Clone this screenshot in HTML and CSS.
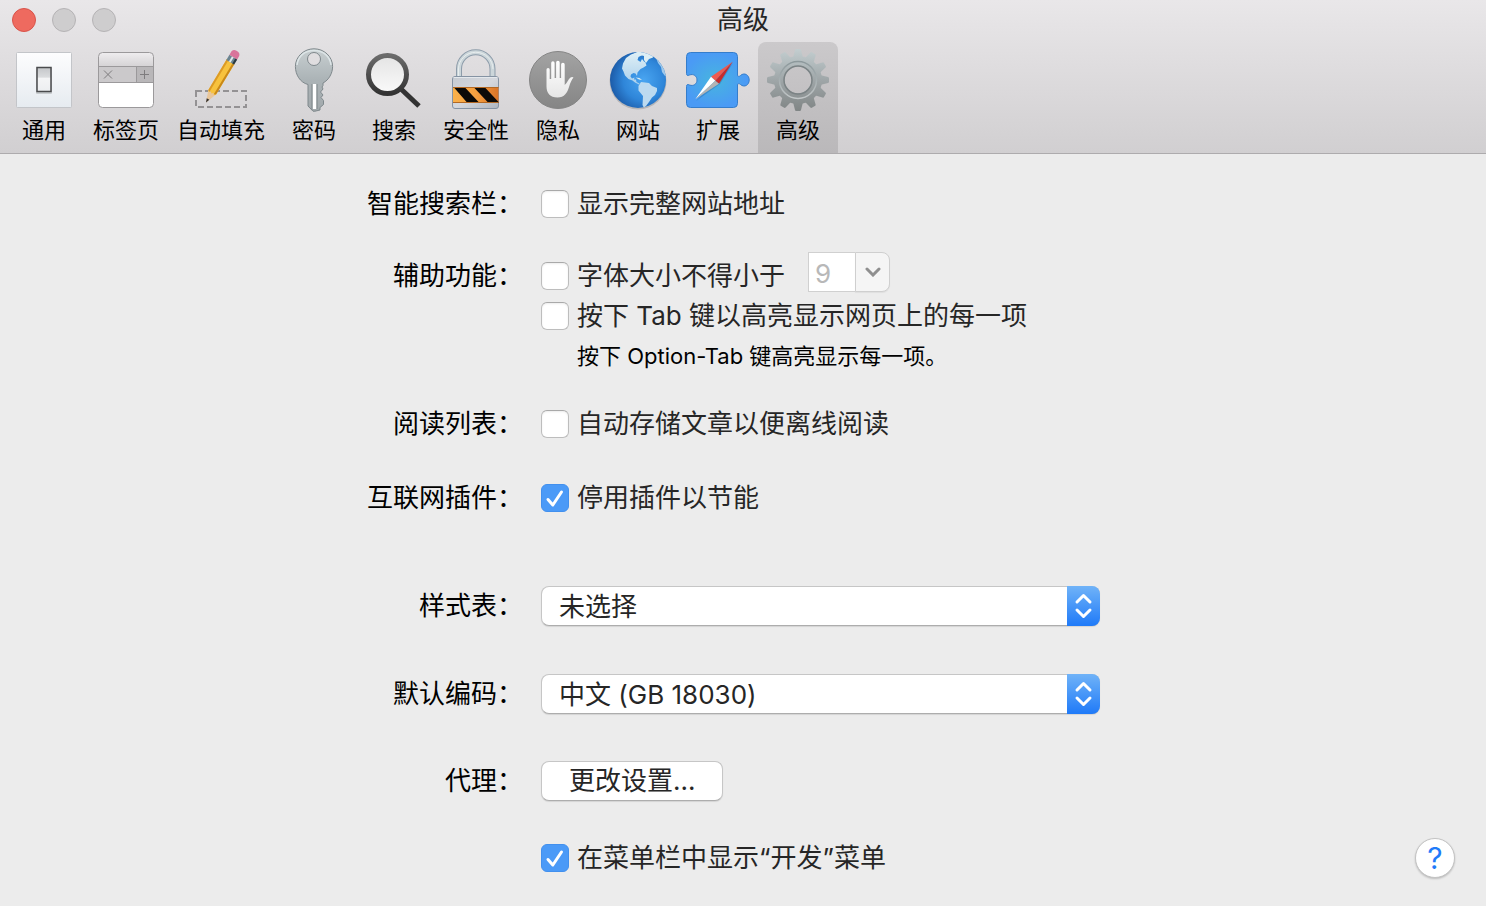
FILE: index.html
```html
<!DOCTYPE html>
<html lang="zh-CN">
<head>
    <meta charset="UTF-8">
    <meta name="viewport" content="width=device-width, initial-scale=1.0">
    <title>高级</title>
    <link rel="stylesheet" href="styles.css">
</head>
<body>
    <header class="window-header">
        <div class="titlebar">
            <div class="lights">
                <button class="light close" type="button" aria-label="关闭"></button>
                <button class="light" type="button" aria-label="最小化"></button>
                <button class="light" type="button" aria-label="缩放"></button>
            </div>
            <h1>高级</h1>
        </div>

        <nav class="toolbar">
            <button class="tool" type="button">
                <svg viewBox="0 0 64 64">
                    <defs>
                        <linearGradient id="plate" x1="0" y1="0" x2="0" y2="1"><stop offset="0" stop-color="#fdfdfe"/><stop offset="1" stop-color="#e6ebf0"/></linearGradient>
                        <linearGradient id="switch" x1="0" y1="0" x2="0" y2="1"><stop offset="0" stop-color="#c4c6c9"/><stop offset=".4" stop-color="#dadcde"/><stop offset=".45" stop-color="#f4f5f6"/><stop offset="1" stop-color="#eceef0"/></linearGradient>
                    </defs>
                    <rect x="4.5" y="4.5" width="55" height="55" rx="1" fill="url(#plate)" stroke="#c3c5c9"/>
                    <rect x="24" y="19" width="16" height="27" rx="1" fill="#000" opacity=".15"/>
                    <rect x="25" y="19.5" width="14" height="24" fill="url(#switch)" stroke="#4a4b4d" stroke-width="1.5"/>
                </svg>
                通用
            </button>
            <button class="tool" type="button">
                <svg viewBox="0 0 64 64">
                    <defs>
                        <linearGradient id="tabtop" x1="0" y1="0" x2="0" y2="1"><stop offset="0" stop-color="#efedef"/><stop offset="1" stop-color="#d5d3d5"/></linearGradient>
                    </defs>
                    <rect x="4.5" y="4.5" width="55" height="55" rx="4" fill="#fff"/>
                    <path d="M4.500 18.500V8.500a4 4 0 0 1 4-4h47a4 4 0 0 1 4 4v10z" fill="url(#tabtop)"/>
                    <path d="M4.500 18.500h38v16h-38z" fill="#cbc9cb"/>
                    <path d="M42.500 18.500h17v16h-17z" fill="#b9b7b9"/>
                    <path d="M4.500 18.500h55M4.500 34.500h55M42.500 18.500v16" stroke="#9b999b" fill="none"/>
                    <rect x="4.500" y="4.500" width="55" height="55" rx="4" fill="none" stroke="#9b999b"/>
                    <path d="M10 22.500l8 8M18 22.500l-8 8M50.500 22v9M46 26.500h9" stroke="#7e7c7e" fill="none"/>
                </svg>
                标签页
            </button>
            <button class="tool" type="button">
                <svg viewBox="0 0 64 64">
                    <rect x="7" y="43" width="50" height="16" fill="none" stroke="#949294" stroke-width="2" stroke-dasharray="6 3"/>
                    <g transform="translate(17 54.500) rotate(31)">
                        <path d="M0 0L-4.500-12h9z" fill="#e8c69b"/>
                        <path d="M0 0l-1.500-4h3z" fill="#33302e"/>
                        <path d="M-4.500-12V-48h9v36l-1.500 1.500L1.500-12 0-10.500-1.500-12-3-10.500z" fill="#f7c23e"/>
                        <path d="M-4.500-12V-48h2v37z" fill="#dc9a25"/>
                        <path d="M2.500-11V-48h2v36z" fill="#c98818"/>
                        <path d="M-4.500-47h9v-6h-9z" fill="#6b8490"/>
                        <path d="M-1.500-47h2v-6h-2z" fill="#dfe8eb"/>
                        <path d="M2.500-47h2v-6h-2z" fill="#293940"/>
                        <path d="M-4.500-53v-4a4 4 0 0 1 4-3h1a4 4 0 0 1 4 3v4z" fill="#d9749b"/>
                    </g>
                </svg>
                自动填充
            </button>
            <button class="tool" type="button">
                <svg viewBox="0 0 64 64">
                    <defs>
                        <linearGradient id="key" x1="0" y1="0" x2="0" y2="1"><stop offset="0" stop-color="#c8cfd1"/><stop offset=".5" stop-color="#abb3b6"/><stop offset="1" stop-color="#a2a9ac"/></linearGradient>
                    </defs>
                    <path fill-rule="evenodd" d="M32 .8C42 .8 50.600 8.500 50.600 18.500c0 6.500-3.600 13.500-9.600 16.500v2.500l-1 1.500 1 2-2.500 3 2.500 3-2 2.500 2.500 3v4l-3.500 3v2.500L33 63.200h-2L26 58V36.500C18 34.500 13.400 26.500 13.400 18.500 13.400 8.500 22 .8 32 .8zM32 4.500a6.500 6.500 0 1 0 0 13 6.500 6.500 0 0 0 0-13z" fill="url(#key)" stroke="#7f888c"/>
                    <path d="M15 17C16 8 23 2.500 32 2.500S48 8 49 17" fill="none" stroke="#dde5e7" stroke-width="1.500"/>
                    <path d="M30.500 36h4v25h-4z" fill="#fff"/>
                    <path d="M30 36v25.500M35 36v25" stroke="#7d8588" fill="none"/>
                </svg>
                密码
            </button>
            <button class="tool" type="button">
                <svg viewBox="0 0 64 64">
                    <defs>
                        <linearGradient id="lens" x1="0" y1="0" x2="0" y2="1"><stop offset="0" stop-color="#e4e4e4"/><stop offset="1" stop-color="#fafafa"/></linearGradient>
                        <linearGradient id="rim" x1="0" y1="0" x2="0" y2="1"><stop offset="0" stop-color="#6b6b6b"/><stop offset="1" stop-color="#333"/></linearGradient>
                    </defs>
                    <path d="M39 41L57 58" stroke="#333" stroke-width="5" fill="none"/>
                    <circle cx="25.500" cy="26.500" r="19" fill="url(#lens)" stroke="url(#rim)" stroke-width="5"/>
                </svg>
                搜索
            </button>
            <button class="tool" type="button">
                <svg viewBox="0 0 64 64">
                    <defs>
                        <linearGradient id="metal" x1="0" y1="0" x2="1" y2="1"><stop offset="0" stop-color="#c6cbd2"/><stop offset=".5" stop-color="#d5d8de"/><stop offset="1" stop-color="#aeb5bf"/></linearGradient>
                        <linearGradient id="warn" x1="0" y1="0" x2="1" y2="0"><stop offset="0" stop-color="#fab14a"/><stop offset=".5" stop-color="#f5a041"/><stop offset="1" stop-color="#da7427"/></linearGradient>
                    </defs>
                    <path d="M15 30V21a16.500 16.500 0 0 1 33.500 0V30" fill="none" stroke="#8d9caa" stroke-width="6"/>
                    <path d="M15 30V21a16.500 16.500 0 0 1 33.500 0V30" fill="none" stroke="#ccd6da" stroke-width="4"/>
                    <path d="M14.500 30V21a17 16.500 0 0 1 34.500 0" fill="none" stroke="#e8eeef" stroke-width="1"/>
                    <rect x="8.500" y="28.500" width="46" height="32" rx="2.500" fill="url(#metal)" stroke="#8593a3"/>
                    <path d="M9.500 29.500h44" stroke="#e4e8ec"/>
                    <path d="M9 39h45.500v16H9z" fill="url(#warn)"/>
                    <path d="M10 39.500h11l14 15H23zM30 39.500h11l14 15H44z" fill="#0b0a08"/>
                    <path d="M9 39.500h45.500M9 54.500h45.500" stroke="#b26925" fill="none"/>
                </svg>
                安全性
            </button>
            <button class="tool" type="button">
                <svg viewBox="0 0 64 64">
                    <defs>
                        <linearGradient id="disc" x1="0" y1="0" x2="0" y2="1"><stop offset="0" stop-color="#a3a3a3"/><stop offset="1" stop-color="#858585"/></linearGradient>
                        <linearGradient id="palm" x1="0" y1="0" x2="0" y2="1"><stop offset="0" stop-color="#fff"/><stop offset="1" stop-color="#e6e6e6"/></linearGradient>
                    </defs>
                    <circle cx="32" cy="32" r="28.500" fill="url(#disc)" stroke="#858585"/>
                    <path d="M20.500 21.500a1.600 1.600 0 0 1 3.200 0V31h1.500V15a1.700 1.700 0 0 1 3.400 0v15h1.500V14.500a1.800 1.800 0 0 1 3.600 0V30h1.400V16.500a1.800 1.800 0 0 1 3.600 0V37c2.500-2 3.500-5.500 5.500-7.200 1.200-1 2.600-1 3.300-.3-1.800 2-3.200 5.500-4.500 9.500-1.600 5.500-4.500 10.500-11.500 10.500-7.500 0-11-4.500-11-11z" fill="url(#palm)"/>
                </svg>
                隐私
            </button>
            <button class="tool" type="button">
                <svg viewBox="0 0 64 64">
                    <defs>
                        <radialGradient id="ocean" cx=".6" cy=".5" r=".6"><stop offset="0" stop-color="#49a5f1"/><stop offset=".6" stop-color="#2f86d9"/><stop offset="1" stop-color="#1c5ba8"/></radialGradient>
                        <linearGradient id="land" x1="0" y1="0" x2="0" y2="1"><stop offset="0" stop-color="#e2f1f6"/><stop offset="1" stop-color="#a9cfec"/></linearGradient>
                        <clipPath id="globe"><circle cx="32" cy="32" r="28"/></clipPath>
                    </defs>
                    <circle cx="32" cy="33" r="28.500" fill="#000" opacity=".15"/>
                    <circle cx="32" cy="32" r="28" fill="url(#ocean)"/>
                    <g clip-path="url(#globe)">
                        <path d="M25 6.500L20 10l-3 5.500-1 5 1.500 3 1.500 4 3.500 3.500 4 1.500 2.500 2 4 2 .5-1-3-1.500-.5-2.500-2 0 .5-2-2.500 1-1.500-2 .5-2 2.500-1.500 2 .5 1.500 2.500.5-3.500 3-3.500 3-1.500 3-2-1-3-1.500-1-2-2.500-1.500 3-3-2 1-3 4-2-2-4z" fill="url(#land)"/>
                        <path d="M28 5.500l5-2h9l6 3-1 3-4 1.500-3 4-2-3 0-4-4-1-3 1zM29.500 29.500l4 .5 2.500 2-3-.5z" fill="#dceef5"/>
                        <path d="M32.500 38l2.500-4 4 .5 4 .5 3 3 5 2 0 3-2 4-3 2.500-3 4.500-3 4-2 2-1.500-3 .5-9-4.500-5.500z" fill="#bcdaf0"/>
                        <path d="M50 10l2 5 3 4 1 5 3 4 2 0V18l-6-8z" fill="#9fc9ec"/>
                    </g>
                </svg>
                网站
            </button>
            <button class="tool" type="button">
                <svg viewBox="0 0 64 64">
                    <defs>
                        <radialGradient id="puzzle" cx=".45" cy=".5" r=".5"><stop offset="0" stop-color="#47b5df"/><stop offset="1" stop-color="#4a9af5"/></radialGradient>
                    </defs>
                    <path d="M4.500 4.500h43a4 4 0 0 1 4 4V27c0 1.500 1.500 2 3 .5 4-3.500 8.700-.5 8.700 4.500s-4.700 8-8.700 4.500c-1.500-1.500-3-1-3 .5v18.500a4 4 0 0 1-4 4h-43a4 4 0 0 1-4-4V38.500c0-2 1-2.500 3-1.500 4 1.500 7.500-1 7.500-5s-3.500-6.500-7.500-5c-2 1-3 .5-3-1.500v-17a4 4 0 0 1 4-4z" fill="url(#puzzle)" stroke="#357dcb"/>
                    <path d="M10 53L34 36 47 15z" fill="#1b5591" opacity=".3"/>
                    <path d="M46.700 13.700L25 28.700l4.300 4z" fill="#ee5a50"/>
                    <path d="M46.700 13.700L33 35.800l-3.700-3.100z" fill="#c72b2b"/>
                    <path d="M9.300 51.300L25 28.700l4.300 4z" fill="#fff"/>
                    <path d="M9.300 51.300L33 35.800l-3.700-3.100z" fill="#b4b4b4"/>
                </svg>
                扩展
            </button>
            <button class="tool selected" type="button" aria-current="page">
                <svg viewBox="0 0 64 64">
                    <defs>
                        <linearGradient id="steel" x1="0" y1="0" x2="0" y2="1"><stop offset="0" stop-color="#c4cfd1"/><stop offset=".5" stop-color="#9fa6a8"/><stop offset="1" stop-color="#7f8484"/></linearGradient>
                        <linearGradient id="ring" x1="0" y1="0" x2="0" y2="1"><stop offset="0" stop-color="#8c989b"/><stop offset="1" stop-color="#c2c7c8"/></linearGradient>
                        <path id="tooth" d="M27 10L29 2q.3-1 1-1h4q.7 0 1 1l2 8z"/>
                        <mask id="gear">
                            <g fill="#fff">
                                <circle cx="32" cy="32" r="24"/>
                                <use href="#tooth"/>
                                <use href="#tooth" transform="rotate(30 32 32)"/>
                                <use href="#tooth" transform="rotate(60 32 32)"/>
                                <use href="#tooth" transform="rotate(90 32 32)"/>
                                <use href="#tooth" transform="rotate(120 32 32)"/>
                                <use href="#tooth" transform="rotate(150 32 32)"/>
                                <use href="#tooth" transform="rotate(180 32 32)"/>
                                <use href="#tooth" transform="rotate(210 32 32)"/>
                                <use href="#tooth" transform="rotate(240 32 32)"/>
                                <use href="#tooth" transform="rotate(270 32 32)"/>
                                <use href="#tooth" transform="rotate(300 32 32)"/>
                                <use href="#tooth" transform="rotate(330 32 32)"/>
                            </g>
                            <circle cx="32" cy="32" r="13.500" fill="#000"/>
                        </mask>
                    </defs>
                    <rect width="64" height="64" fill="url(#steel)" mask="url(#gear)"/>
                    <circle cx="32" cy="32" r="18.500" fill="none" stroke="url(#ring)" stroke-width="1.500"/>
                    <circle cx="32" cy="32" r="14" fill="none" stroke="#7b8385" stroke-width="1.500"/>
                </svg>
                高级
            </button>
        </nav>
    </header>

    <main class="settings">
        <div class="row">
            <span class="label">智能搜索栏：</span>
            <label class="check"><input type="checkbox">显示完整网站地址</label>
        </div>

        <div class="row row-size">
            <span class="label">辅助功能：</span>
            <div class="controls">
                <label class="check"><input type="checkbox">字体大小不得小于</label>
                <div class="combo">
                    <input type="text" value="9" aria-label="最小字体大小" disabled>
                    <button type="button" aria-label="选择字体大小" disabled>
                        <svg viewBox="0 0 16 10"><path d="M2 2l6 6 6-6"/></svg>
                    </button>
                </div>
            </div>
        </div>
        <div class="row">
            <label class="check"><input type="checkbox">按下 Tab 键以高亮显示网页上的每一项</label>
        </div>
        <div class="row">
            <p class="hint">按下 Option-Tab 键高亮显示每一项。</p>
        </div>

        <div class="row row-reading">
            <span class="label">阅读列表：</span>
            <label class="check"><input type="checkbox">自动存储文章以便离线阅读</label>
        </div>

        <div class="row row-plugins">
            <span class="label">互联网插件：</span>
            <label class="check"><input type="checkbox" checked>停用插件以节能</label>
        </div>

        <div class="row row-style">
            <label class="label" for="stylesheet">样式表：</label>
            <div class="popup">
                <select id="stylesheet"><option>未选择</option></select>
                <svg class="arrows" viewBox="0 0 33 40"><path d="M10 16l6.500-6.500L23 16M10 24l6.500 6.500L23 24"/></svg>
            </div>
        </div>

        <div class="row row-encoding">
            <label class="label" for="encoding">默认编码：</label>
            <div class="popup">
                <select id="encoding"><option>中文 (GB 18030)</option></select>
                <svg class="arrows" viewBox="0 0 33 40"><path d="M10 16l6.500-6.500L23 16M10 24l6.500 6.500L23 24"/></svg>
            </div>
        </div>

        <div class="row row-proxy">
            <span class="label">代理：</span>
            <button class="push" type="button">更改设置...</button>
        </div>

        <div class="row row-develop">
            <div class="controls">
                <label class="check"><input type="checkbox" checked>在菜单栏中显示“开发”菜单</label>
                <button class="help" type="button" aria-label="帮助">?</button>
            </div>
        </div>
    </main>
</body>
</html>
```
FILE: styles.css
```css
* {
    box-sizing: border-box;
}

body {
    margin: 0;
    min-height: 100vh;
    background: #ececec;
    color: #000;
    font-family: Inter, "Noto Sans CJK SC", sans-serif;
    font-size: 26px;
    line-height: 40px;
}

button,
input,
select {
    margin: 0;
    padding: 0;
    border: none;
    color: inherit;
    font: inherit;
}

/* title bar and toolbar */
.window-header {
    background: linear-gradient(#e9e7e9, #d1cfd1);
    border-bottom: 1px solid #adabad;
}

.titlebar {
    display: grid;
    grid-template-columns: 1fr auto 1fr;
    align-items: center;
    height: 42px;
    padding: 0 12px 2px;
}

.titlebar h1 {
    margin: 0;
    color: #262626;
    font-size: 26px;
    font-weight: 400;
}

.lights {
    display: flex;
    gap: 16px;
}

.light {
    width: 24px;
    height: 24px;
    border: 1px solid #b5b3b5;
    border-radius: 50%;
    background: #cecdce;
}

.light.close {
    border-color: #d9534a;
    background: #ee6a5f;
}

.toolbar {
    display: flex;
    padding-left: 4px;
}

.tool {
    display: flex;
    flex-direction: column;
    align-items: center;
    min-width: 80px;
    height: 111px;
    padding: 6px 9px 0;
    background: none;
    font-size: 22px;
    line-height: 36px;
    white-space: nowrap;
}

.tool svg {
    width: 64px;
    height: 64px;
    flex: none;
    margin: 0 -1px;
    overflow: visible;
}

.tool.selected {
    border-radius: 8px 8px 0 0;
    background: linear-gradient(#cbc9cb, #bab8ba);
}

/* settings form */
.settings {
    padding: 30px 0 28px;
}

.row {
    display: grid;
    grid-template-columns: 523fr 945fr;
    column-gap: 18px;
    align-items: end;
    min-height: 40px;
}

.row > * {
    grid-column: 2;
}

.row > .label {
    grid-column: 1;
    grid-row: 1;
    text-align: right;
}

.row-size {
    min-height: 44px;
    margin-top: 28px;
}

.row-reading {
    margin-top: 28px;
}

.row-plugins {
    margin-top: 34px;
}

.row-style {
    margin-top: 68px;
}

.row-encoding {
    margin-top: 48px;
}

.row-proxy {
    margin-top: 47px;
}

.row-develop {
    margin-top: 37px;
}

.controls {
    display: flex;
    align-items: flex-end;
}

.check {
    display: flex;
    align-items: center;
    gap: 8px;
    color: #262626;
}

.check input {
    appearance: none;
    flex: none;
    width: 28px;
    height: 28px;
    border: 1px solid #bdbdbd;
    border-top-color: #a9a9a9;
    border-radius: 6px;
    background: #fff;
    box-shadow: inset 0 1px 2px rgba(0, 0, 0, 0.08);
}

.check input:checked {
    border-color: #4290ee;
    background: #4b9af7 url("data:image/svg+xml,%3Csvg xmlns='http://www.w3.org/2000/svg' viewBox='0 0 26 26'%3E%3Cpath d='M6 14.500l4.800 5.500L19.500 7' fill='none' stroke='white' stroke-width='3' stroke-linecap='round' stroke-linejoin='round'/%3E%3C/svg%3E");
    box-shadow: none;
}

.hint {
    margin: 0;
    padding-left: 36px;
    font-size: 22px;
}

.combo {
    display: flex;
    align-self: flex-start;
    height: 40px;
    margin: 0 0 4px 23px;
}

.combo input {
    width: 47px;
    padding: 4px 6px 0;
    border: 1px solid #d0d0d0;
    border-right: none;
    background: #fff;
    color: #b8b8b8;
}

.combo button {
    display: flex;
    align-items: center;
    justify-content: center;
    width: 35px;
    border: 1px solid #cfcfcf;
    border-radius: 0 8px 8px 0;
    background: #f5f5f5;
    box-shadow: 0 1px 1px rgba(0, 0, 0, 0.06);
}

.combo svg {
    width: 16px;
    height: 10px;
}

.combo path {
    fill: none;
    stroke: #8f8f8f;
    stroke-width: 3;
    stroke-linecap: round;
}

.popup {
    position: relative;
    width: 100%;
    max-width: 559px;
    height: 40px;
}

.popup select {
    appearance: none;
    width: 100%;
    height: 40px;
    padding: 0 48px 0 17px;
    border: 1px solid #c6c6c6;
    border-bottom-color: #adadad;
    border-radius: 8px;
    background: #fff;
    box-shadow: 0 1px 1px rgba(0, 0, 0, 0.1);
    color: #262626;
}

.arrows {
    position: absolute;
    top: 0;
    right: 0;
    width: 33px;
    height: 40px;
    border-radius: 0 8px 8px 0;
    background: linear-gradient(#70b3f8, #1f7af8);
    pointer-events: none;
}

.arrows path {
    fill: none;
    stroke: #fff;
    stroke-width: 3;
    stroke-linecap: round;
    stroke-linejoin: round;
}

.push {
    justify-self: start;
    height: 40px;
    padding: 0 27px;
    border: 1px solid #c6c6c6;
    border-bottom-color: #adadad;
    border-radius: 8px;
    background: #fff;
    box-shadow: 0 1px 1px rgba(0, 0, 0, 0.1);
    color: #262626;
    line-height: 38px;
}

.row-develop .controls {
    justify-content: space-between;
    padding-right: 31px;
}

.help {
    width: 40px;
    height: 40px;
    border: 1px solid #c3c3c3;
    border-radius: 50%;
    background: #fff;
    box-shadow: 0 1px 2px rgba(0, 0, 0, 0.2);
    color: #1f7bf9;
    font-size: 30px;
    line-height: 38px;
}
```
